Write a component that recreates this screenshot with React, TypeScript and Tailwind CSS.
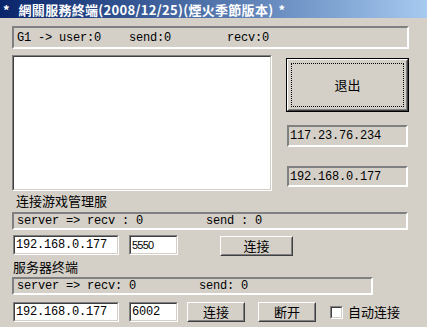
import React from 'react';

const cjk = "font-['Noto_Sans_CJK_SC','Noto_Sans',sans-serif]";
const mono = "font-['Liberation_Mono',monospace] text-[12px] tracking-[-0.2px]";

// gray read-only box, like a static edge
const StaticBox = ({ className = '', children }: { className?: string; children?: React.ReactNode }) => (
  <div
    className={`border-2 border-t-[#808080] border-l-[#808080] border-b-white border-r-white bg-[#d4d0c8] flex items-center ${className}`}
  >
    {children}
  </div>
);

// white sunken field (edit / list)
const Field = ({ className = '', children }: { className?: string; children?: React.ReactNode }) => (
  <div className={`border border-t-[#808080] border-l-[#808080] border-b-white border-r-white ${className}`}>
    <div className="w-full h-full border border-t-[#404040] border-l-[#404040] border-b-[#d4d0c8] border-r-[#d4d0c8] bg-white flex items-center">
      {children}
    </div>
  </div>
);

const Button = ({ className = '', children }: { className?: string; children?: React.ReactNode }) => (
  <div className={`border border-t-white border-l-white border-b-[#404040] border-r-[#404040] ${className}`}>
    <div className={`w-full h-full border border-t-transparent border-l-transparent border-b-[#808080] border-r-[#808080] flex items-center justify-center text-[13px] text-black ${cjk}`}>
      {children}
    </div>
  </div>
);

const App = () => {
  return (
    <div className="w-[427px] h-[327px] bg-[#d4d0c8] overflow-hidden flex flex-col text-black">
      {/* Title bar */}
      <div className={`h-[18px] bg-gradient-to-r from-[#0a246a] to-[#a6caf0] flex items-center pl-[3px] text-white font-bold text-[13px] leading-none ${cjk}`}>
        <span className="whitespace-pre">* </span>
        <span className="ml-[6px] tracking-[0.3px] font-['Noto_Sans_CJK_TC',sans-serif]">網關服務終端(2008/12/25)(煙火季節版本)</span>
        <span className="ml-[5px]">*</span>
      </div>

      <div className="pl-[12px] flex flex-col">
        <StaticBox className="mt-[8px] w-[397px] h-[23px] pl-[3px]">
          <span className={`${mono} whitespace-pre`}>G1 -&gt; user:0    send:0        recv:0</span>
        </StaticBox>

        <div className="mt-[6px] flex">
          <Field className="w-[260px] h-[136px]" />
          <div className="ml-[14px] flex flex-col">
            <div className="mt-[3px] w-[123px] h-[54px] border border-black">
              <Button className="w-full h-full">
                <div className="w-[113px] h-[44px] border border-dotted border-black flex items-center justify-center">
                  退出
                </div>
              </Button>
            </div>
            <StaticBox className="mt-[13px] ml-[1px] w-[121px] h-[22px] pl-[1px]">
              <span className={mono}>117.23.76.234</span>
            </StaticBox>
            <StaticBox className="mt-[19px] ml-[1px] w-[121px] h-[21px] pl-[1px]">
              <span className={mono}>192.168.0.177</span>
            </StaticBox>
          </div>
        </div>

        <div className={`mt-[2px] ml-[4px] h-[16px] text-[13px] leading-[16px] ${cjk}`}>连接游戏管理服</div>
        <StaticBox className="mt-[3px] w-[396px] h-[18px] pl-[3px]">
          <span className={`${mono} whitespace-pre`}>server =&gt; recv : 0         send : 0</span>
        </StaticBox>

        <div className="mt-[5px] flex items-start">
          <Field className="ml-[1px] w-[106px] h-[20px]">
            <span className={`${mono} pl-[1px]`}>192.168.0.177</span>
          </Field>
          <Field className="ml-[10px] w-[49px] h-[20px]">
            <span className="font-['Liberation_Sans',sans-serif] text-[11px] tracking-[-0.8px] pl-[1px]">5550</span>
          </Field>
          <Button className="ml-[42px] mt-[1px] w-[73px] h-[20px]">连接</Button>
        </div>

        <div className={`mt-[3px] ml-[1px] h-[16px] text-[13px] leading-[16px] ${cjk}`}>服务器终端</div>
        <StaticBox className="mt-[2px] w-[361px] h-[18px] pl-[3px]">
          <span className={`${mono} whitespace-pre`}>server =&gt; recv: 0         send: 0</span>
        </StaticBox>

        <div className="mt-[7px] flex items-center">
          <Field className="ml-[1px] w-[106px] h-[20px]">
            <span className={`${mono} pl-[1px]`}>192.168.0.177</span>
          </Field>
          <Field className="ml-[10px] w-[49px] h-[20px]">
            <span className={`${mono} pl-[1px]`}>6002</span>
          </Field>
          <Button className="ml-[9px] w-[58px] h-[20px]">连接</Button>
          <Button className="ml-[13px] w-[58px] h-[20px]">断开</Button>
          <Field className="ml-[14px] w-[13px] h-[13px]" />
          <span className={`ml-[5px] text-[13px] ${cjk}`}>自动连接</span>
        </div>
      </div>
    </div>
  );
};

export default App;
